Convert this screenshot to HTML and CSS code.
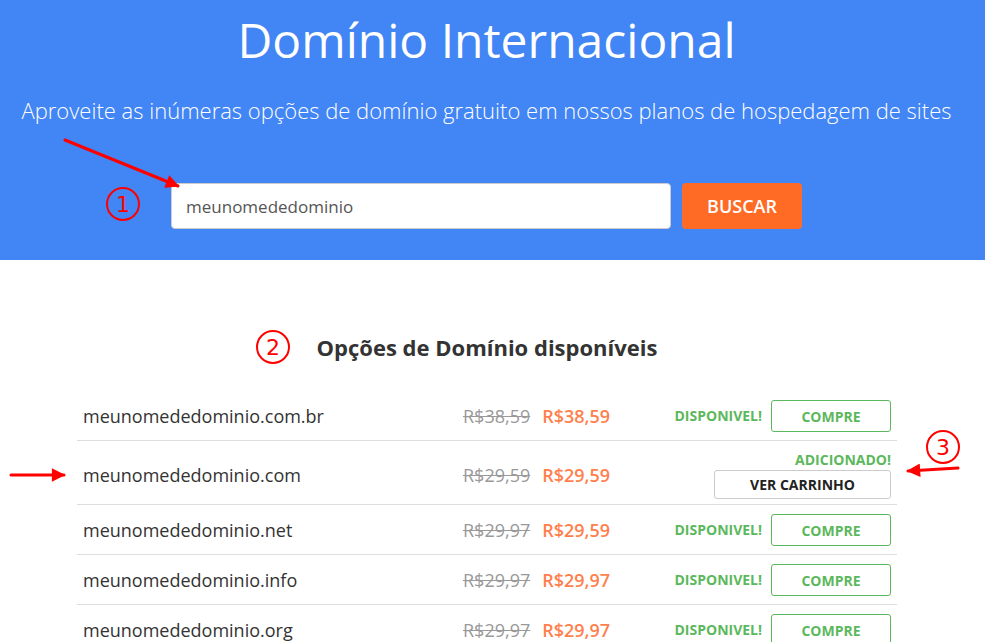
FILE: index.html
```html
<!DOCTYPE html>
<html lang="pt-BR">
<head>
<meta charset="utf-8">
<title>Domínio Internacional</title>
<link rel="stylesheet" href="styles.css">
</head>
<body>
<header class="hero">
  <h1 class="hero-title">Domínio Internacional</h1>
  <p class="hero-sub">Aproveite as inúmeras opções de domínio gratuito em nossos planos de hospedagem de sites</p>
  <form class="search">
    <input class="search-input" type="text" value="meunomededominio">
    <button class="search-btn" type="button">BUSCAR</button>
  </form>
</header>

<main class="results">
  <h2 class="results-title">Opções de Domínio disponíveis</h2>
  <div class="table">
    <div class="row">
      <div class="domain">meunomededominio.com.br</div>
      <div class="prices"><s class="old">R$38,59</s><span class="new">R$38,59</span></div>
      <div class="actions"><span class="status">DISPONIVEL!</span><button class="btn-buy">COMPRE</button></div>
    </div>
    <div class="row row-added">
      <div class="domain">meunomededominio.com</div>
      <div class="prices"><s class="old">R$29,59</s><span class="new">R$29,59</span></div>
      <div class="actions actions-added"><span class="status">ADICIONADO!</span><button class="btn-cart">VER CARRINHO</button></div>
    </div>
    <div class="row">
      <div class="domain">meunomededominio.net</div>
      <div class="prices"><s class="old">R$29,97</s><span class="new">R$29,59</span></div>
      <div class="actions"><span class="status">DISPONIVEL!</span><button class="btn-buy">COMPRE</button></div>
    </div>
    <div class="row">
      <div class="domain">meunomededominio.info</div>
      <div class="prices"><s class="old">R$29,97</s><span class="new">R$29,97</span></div>
      <div class="actions"><span class="status">DISPONIVEL!</span><button class="btn-buy">COMPRE</button></div>
    </div>
    <div class="row">
      <div class="domain">meunomededominio.org</div>
      <div class="prices"><s class="old">R$29,97</s><span class="new">R$29,97</span></div>
      <div class="actions"><span class="status">DISPONIVEL!</span><button class="btn-buy">COMPRE</button></div>
    </div>
  </div>
</main>

<svg class="annotations" width="985" height="642" viewBox="0 0 985 642" xmlns="http://www.w3.org/2000/svg">
  <defs>
    <marker id="head" viewBox="0 0 10 10" refX="9" refY="5" markerWidth="5" markerHeight="4.5" orient="auto" markerUnits="strokeWidth">
      <path d="M0 0 L10 5 L0 10 Z" fill="#f00"/>
    </marker>
  </defs>
  <g fill="none" stroke="#f00" stroke-width="2">
    <circle cx="123" cy="204" r="16"/>
    <circle cx="273" cy="347" r="16"/>
    <circle cx="943" cy="447" r="16"/>
  </g>
  <g stroke="#f00" stroke-width="3" stroke-linecap="round" fill="none">
    <line x1="65" y1="140" x2="178" y2="186" marker-end="url(#head)"/>
    <line x1="11" y1="475" x2="64" y2="475" marker-end="url(#head)"/>
    <line x1="958" y1="468" x2="908" y2="471" marker-end="url(#head)"/>
  </g>
  <g class="anno-num" fill="#f00">
    <text x="123" y="212" text-anchor="middle">1</text>
    <text x="273" y="355" text-anchor="middle">2</text>
    <text x="943" y="455" text-anchor="middle">3</text>
  </g>
</svg>
</body>
</html>
```
FILE: styles.css
```css
* { box-sizing: border-box; }

html, body {
  margin: 0;
  padding: 0;
  background: #fff;
}

body {
  position: relative;
  width: 985px;
  height: 642px;
  overflow: hidden;
  font-family: "Open Sans", "Liberation Sans", sans-serif;
  color: #333;
}

.hero {
  background: #4285f4;
  height: 260px;
  padding: 12px 12px 0 0;
  text-align: center;
  color: #fff;
}

.hero-title {
  margin: 0;
  font-size: 48px;
  font-weight: 400;
  line-height: 55px;
}

.hero-sub {
  margin: 28px 0 0;
  font-size: 22px;
  font-weight: 300;
  line-height: 30px;
}

.search {
  margin-top: 58px;
  display: flex;
  justify-content: center;
  gap: 11px;
}

.search-input {
  width: 500px;
  height: 46px;
  border: 1px solid #ccc;
  border-radius: 4px;
  padding: 0 14px;
  font-family: "Open Sans", "Liberation Sans", sans-serif;
  font-size: 17px;
  color: #555;
  outline: none;
}

.search-btn {
  width: 120px;
  height: 46px;
  border: 0;
  border-radius: 4px;
  background: #ff6a25;
  color: #fff;
  font-family: "Open Sans", "Liberation Sans", sans-serif;
  font-size: 18px;
  font-weight: 600;
}

.results {
  padding-top: 72px;
}

.results-title {
  margin: 0;
  text-align: center;
  font-size: 22px;
  font-weight: 700;
  line-height: 30px;
  color: #333;
  padding-right: 11px;
}

.table {
  width: 820px;
  margin: 29px 0 0 77px;
}

.row {
  display: grid;
  grid-template-columns: 380px auto 1fr;
  align-items: center;
  padding: 9px 6px 8px 6px;
  border-bottom: 1px solid #ddd;
}

.row-added {
  padding-bottom: 5px;
}

.domain {
  font-size: 18px;
  color: #333;
}

.prices {
  display: flex;
  gap: 12px;
  font-size: 18px;
}

.old {
  color: #999;
}

.new {
  color: #ff7f4d;
  font-weight: 600;
}

.actions {
  display: flex;
  justify-content: flex-end;
  align-items: center;
  gap: 9px;
}

.actions-added {
  flex-direction: column;
  align-items: flex-end;
  gap: 0;
}

.status {
  color: #5cb85c;
  font-size: 14px;
  font-weight: 700;
  line-height: 20px;
}

.btn-buy,
.btn-cart {
  font-family: "Open Sans", "Liberation Sans", sans-serif;
  font-size: 14px;
  font-weight: 700;
  background: #fff;
  border-radius: 3px;
}

.btn-buy {
  width: 120px;
  height: 32px;
  border: 1px solid #5cb85c;
  color: #5cb85c;
}

.btn-cart {
  width: 177px;
  height: 29px;
  border: 1px solid #ccc;
  color: #222;
}

.annotations {
  position: absolute;
  left: 0;
  top: 0;
  pointer-events: none;
}

.anno-num {
  font-family: "DejaVu Sans", "Liberation Sans", sans-serif;
  font-size: 22px;
}
```
